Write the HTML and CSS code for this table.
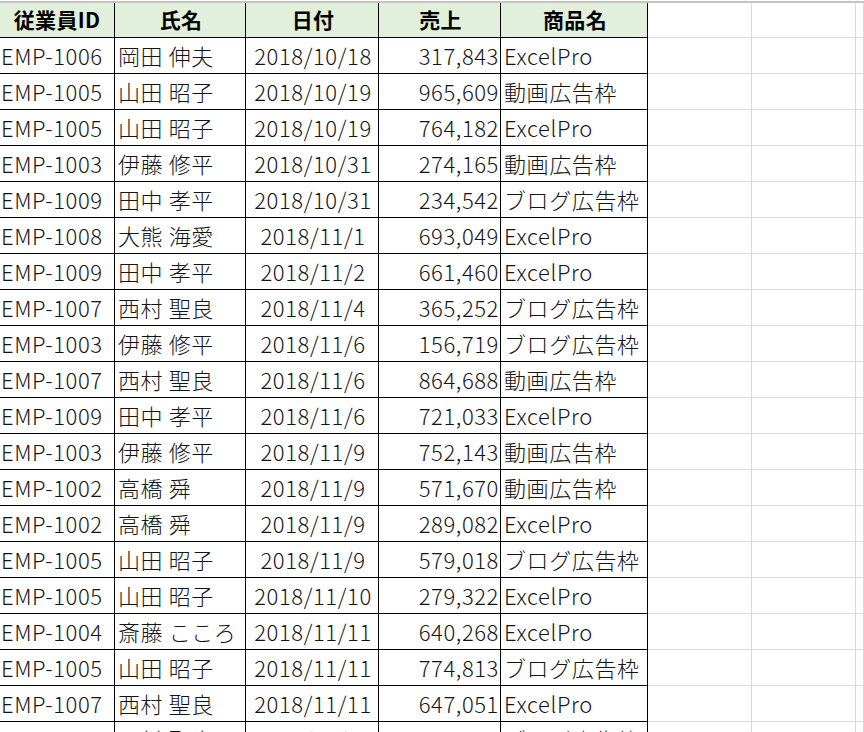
FILE: index.html
```html
<!DOCTYPE html>
<html lang="ja">
<head>
<meta charset="utf-8">
<link rel="stylesheet" href="styles.css">
</head>
<body>
<div class="topline"></div>
<div class="sheet">
  <div class="row head">
    <div class="c t">従業員ID</div><div class="c t">氏名</div><div class="c t">日付</div><div class="c t">売上</div><div class="c t last">商品名</div><div class="c e"></div><div class="c e"></div><div class="c e"></div>
  </div>
  <div class="row"><div class="c t">EMP-1006</div><div class="c t">岡田 伸夫</div><div class="c t d">2018/10/18</div><div class="c t n">317,843</div><div class="c t last">ExcelPro</div><div class="c e"></div><div class="c e"></div><div class="c e"></div></div>
  <div class="row"><div class="c t">EMP-1005</div><div class="c t">山田 昭子</div><div class="c t d">2018/10/19</div><div class="c t n">965,609</div><div class="c t last">動画広告枠</div><div class="c e"></div><div class="c e"></div><div class="c e"></div></div>
  <div class="row"><div class="c t">EMP-1005</div><div class="c t">山田 昭子</div><div class="c t d">2018/10/19</div><div class="c t n">764,182</div><div class="c t last">ExcelPro</div><div class="c e"></div><div class="c e"></div><div class="c e"></div></div>
  <div class="row"><div class="c t">EMP-1003</div><div class="c t">伊藤 修平</div><div class="c t d">2018/10/31</div><div class="c t n">274,165</div><div class="c t last">動画広告枠</div><div class="c e"></div><div class="c e"></div><div class="c e"></div></div>
  <div class="row"><div class="c t">EMP-1009</div><div class="c t">田中 孝平</div><div class="c t d">2018/10/31</div><div class="c t n">234,542</div><div class="c t last">ブログ広告枠</div><div class="c e"></div><div class="c e"></div><div class="c e"></div></div>
  <div class="row"><div class="c t">EMP-1008</div><div class="c t">大熊 海愛</div><div class="c t d">2018/11/1</div><div class="c t n">693,049</div><div class="c t last">ExcelPro</div><div class="c e"></div><div class="c e"></div><div class="c e"></div></div>
  <div class="row"><div class="c t">EMP-1009</div><div class="c t">田中 孝平</div><div class="c t d">2018/11/2</div><div class="c t n">661,460</div><div class="c t last">ExcelPro</div><div class="c e"></div><div class="c e"></div><div class="c e"></div></div>
  <div class="row"><div class="c t">EMP-1007</div><div class="c t">西村 聖良</div><div class="c t d">2018/11/4</div><div class="c t n">365,252</div><div class="c t last">ブログ広告枠</div><div class="c e"></div><div class="c e"></div><div class="c e"></div></div>
  <div class="row"><div class="c t">EMP-1003</div><div class="c t">伊藤 修平</div><div class="c t d">2018/11/6</div><div class="c t n">156,719</div><div class="c t last">ブログ広告枠</div><div class="c e"></div><div class="c e"></div><div class="c e"></div></div>
  <div class="row"><div class="c t">EMP-1007</div><div class="c t">西村 聖良</div><div class="c t d">2018/11/6</div><div class="c t n">864,688</div><div class="c t last">動画広告枠</div><div class="c e"></div><div class="c e"></div><div class="c e"></div></div>
  <div class="row"><div class="c t">EMP-1009</div><div class="c t">田中 孝平</div><div class="c t d">2018/11/6</div><div class="c t n">721,033</div><div class="c t last">ExcelPro</div><div class="c e"></div><div class="c e"></div><div class="c e"></div></div>
  <div class="row"><div class="c t">EMP-1003</div><div class="c t">伊藤 修平</div><div class="c t d">2018/11/9</div><div class="c t n">752,143</div><div class="c t last">動画広告枠</div><div class="c e"></div><div class="c e"></div><div class="c e"></div></div>
  <div class="row"><div class="c t">EMP-1002</div><div class="c t">高橋 舜</div><div class="c t d">2018/11/9</div><div class="c t n">571,670</div><div class="c t last">動画広告枠</div><div class="c e"></div><div class="c e"></div><div class="c e"></div></div>
  <div class="row"><div class="c t">EMP-1002</div><div class="c t">高橋 舜</div><div class="c t d">2018/11/9</div><div class="c t n">289,082</div><div class="c t last">ExcelPro</div><div class="c e"></div><div class="c e"></div><div class="c e"></div></div>
  <div class="row"><div class="c t">EMP-1005</div><div class="c t">山田 昭子</div><div class="c t d">2018/11/9</div><div class="c t n">579,018</div><div class="c t last">ブログ広告枠</div><div class="c e"></div><div class="c e"></div><div class="c e"></div></div>
  <div class="row"><div class="c t">EMP-1005</div><div class="c t">山田 昭子</div><div class="c t d">2018/11/10</div><div class="c t n">279,322</div><div class="c t last">ExcelPro</div><div class="c e"></div><div class="c e"></div><div class="c e"></div></div>
  <div class="row"><div class="c t">EMP-1004</div><div class="c t">斎藤 こころ</div><div class="c t d">2018/11/11</div><div class="c t n">640,268</div><div class="c t last">ExcelPro</div><div class="c e"></div><div class="c e"></div><div class="c e"></div></div>
  <div class="row"><div class="c t">EMP-1005</div><div class="c t">山田 昭子</div><div class="c t d">2018/11/11</div><div class="c t n">774,813</div><div class="c t last">ブログ広告枠</div><div class="c e"></div><div class="c e"></div><div class="c e"></div></div>
  <div class="row"><div class="c t">EMP-1007</div><div class="c t">西村 聖良</div><div class="c t d">2018/11/11</div><div class="c t n">647,051</div><div class="c t last">ExcelPro</div><div class="c e"></div><div class="c e"></div><div class="c e"></div></div>
  <div class="row"><div class="c t">EMP-1007</div><div class="c t">西村 聖良</div><div class="c t d">2018/11/12</div><div class="c t n">412,376</div><div class="c t last">ブログ広告枠</div><div class="c e"></div><div class="c e"></div><div class="c e"></div></div>
</div>
</body>
</html>
```
FILE: styles.css
```css
html, body {
  margin: 0;
  padding: 0;
  background: #ffffff;
  overflow: hidden;
}
body {
  font-family: "Noto Sans CJK JP", "Noto Sans", sans-serif;
  font-size: 22px;
  font-weight: 300;
  color: #141414;
}
.topline {
  height: 1px;
  border-bottom: 2px solid #c4c4c4;
}
.sheet {
  display: grid;
  grid-template-columns: 115px 131px 133px 122px 147px 104px 104px 1fr;
}
.row {
  display: contents;
}
.c {
  box-sizing: border-box;
  height: 36px;
  border-right: 1px solid #d9d9d9;
  border-bottom: 1px solid #d9d9d9;
  display: flex;
  align-items: center;
  padding: 0 1px 2px 3px;
  white-space: nowrap;
  overflow: hidden;
  line-height: 1;
  letter-spacing: 0.6px;
}
.c:first-child {
  padding-left: 1px;
}
.c.t {
  border-right-color: #000;
  border-bottom-color: #000;
}
.head .c {
  height: 35px;
}
.head .c.t {
  background: #e2efda;
  justify-content: center;
  font-weight: bold;
  font-size: 21px;
  letter-spacing: 0.3px;
  color: #000;
}
.c.d {
  justify-content: center;
}
.c.n {
  justify-content: flex-end;
}
```
